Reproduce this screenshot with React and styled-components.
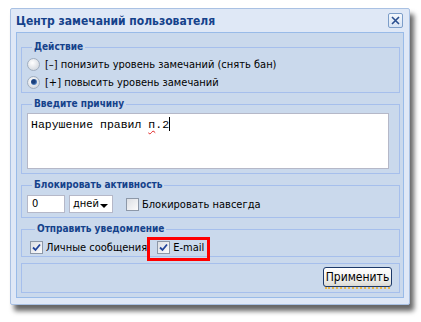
import styled, { createGlobalStyle } from "styled-components";

const GlobalStyle = createGlobalStyle`
  html, body {
    margin: 0;
    padding: 0;
    background: #ffffff;
  }
  body {
    font-family: "DejaVu Sans Condensed", "Liberation Sans", sans-serif;
    font-size: 11px;
  }
`;

const Stage = styled.div`
  width: 421px;
  height: 322px;
  padding: 8px 0 0 10px;
  box-sizing: border-box;
`;

const Window = styled.div`
  width: 400px;
  height: 297px;
  box-sizing: border-box;
  border: 1px solid #a9c1e3;
  border-radius: 2px;
  background: #dfe8f6;
  box-shadow: 4px 6px 5px rgba(0, 0, 0, 0.6);
  display: flex;
  flex-direction: column;
  padding: 0 5px 6px 5px;
`;

const Header = styled.div`
  height: 23px;
  display: flex;
  align-items: center;
  justify-content: space-between;
`;

const Title = styled.span`
  font-weight: bold;
  font-size: 12px;
  color: #15428b;
`;

const CloseButton = styled.div`
  width: 13px;
  height: 13px;
  margin: -1px 1px 0 0;
  border: 1px solid #7d9ec9;
  border-radius: 2px;
  background: linear-gradient(#f4f8fd, #d8e4f4);
  display: flex;
  align-items: center;
  justify-content: center;
`;

const Body = styled.div`
  flex: 1;
  border: 1px solid #99bbe8;
  background: #cad9ec;
  padding: 8px 3px 4px 4px;
  display: flex;
  flex-direction: column;
  gap: 5px;
`;

const Group = styled.fieldset`
  margin: 0;
  border: 1px solid #a6bfec;
  padding: ${(p) => p.$pad || "2px 5px 1px 5px"};
  min-width: 0;
  position: relative;
`;

const Legend = styled.legend`
  padding: 0 2px;
  margin-left: 5px;
  font-weight: bold;
  font-size: 10px;
  color: #15428b;
  line-height: 12px;
`;

const OptionRow = styled.label`
  height: 18px;
  display: flex;
  align-items: center;
  gap: 5px;
  color: #000;
  font-size: 11px;
`;

const Radio = styled.span`
  width: 11px;
  height: 11px;
  border-radius: 50%;
  border: 1px solid #a0aec0;
  background: radial-gradient(circle at 40% 35%, #ffffff, #d3d8df 80%);
  display: flex;
  align-items: center;
  justify-content: center;
  &::after {
    content: "";
    display: ${(p) => (p.$checked ? "block" : "none")};
    width: 6px;
    height: 6px;
    border-radius: 50%;
    background: radial-gradient(circle at 40% 40%, #1b3f7a 35%, #5d8fcf 75%, #a9c7ea);
  }
`;

const ReasonArea = styled.div`
  width: 362px;
  height: 56px;
  box-sizing: border-box;
  background: #ffffff;
  border: 1px solid #b5b8c8;
  padding: 3px 3px;
  font-family: "Liberation Mono", monospace;
  font-size: 11.5px;
  color: #000;
  line-height: 16px;
`;

const Misspelled = styled.span`
  text-decoration: underline wavy #e02020;
  text-decoration-thickness: 1px;
  text-underline-offset: 2px;
`;

const Caret = styled.span`
  display: inline-block;
  width: 1px;
  height: 14px;
  background: #000;
  vertical-align: -3px;
`;

const InlineRow = styled.div`
  display: flex;
  align-items: center;
  gap: ${(p) => p.$gap || "4px"};
  height: ${(p) => p.$h || "18px"};
`;

const NumberInput = styled.div`
  width: 38px;
  height: 18px;
  box-sizing: border-box;
  background: #fff;
  border: 1px solid #b5b8c8;
  padding: 0 4px;
  font-size: 11px;
  line-height: 16px;
  color: #000;
`;

const Select = styled.div`
  width: 44px;
  height: 18px;
  box-sizing: border-box;
  background: #fff;
  border: 1px solid #b5b8c8;
  padding: 0 4px 0 3px;
  font-size: 11px;
  line-height: 16px;
  color: #000;
  display: flex;
  align-items: center;
  justify-content: space-between;
  margin-right: 9px;
  &::after {
    content: "";
    width: 0;
    height: 0;
    border-left: 4px solid transparent;
    border-right: 4px solid transparent;
    border-top: 4px solid #000;
    margin-top: 3px;
  }
`;

const CheckLabel = styled.label`
  display: flex;
  align-items: center;
  gap: 3px;
  font-size: 11px;
  color: #000;
`;

const Box = styled.span`
  width: 11px;
  height: 11px;
  border: 1px solid #8d98a8;
  background: linear-gradient(135deg, #dcdfe4, #fbfbfc);
  display: flex;
  align-items: center;
  justify-content: center;
`;

const Highlight = styled.div`
  position: absolute;
  left: 125px;
  top: 2px;
  width: 57px;
  height: 18px;
  border: 3px solid #ff0000;
`;

const Footer = styled.div`
  flex: 1;
  margin-top: 1px;
  border: 1px solid #a6bfec;
  display: flex;
  justify-content: flex-end;
  align-items: flex-start;
  padding: 3px 7px 0 0;
`;

const Button = styled.button`
  width: 69px;
  height: 20px;
  box-sizing: border-box;
  border: 1px solid #1d3a6a;
  border-radius: 3px;
  background: linear-gradient(#ffffff, #f1f1ee 60%, #dcdbd4);
  font-family: "DejaVu Sans Condensed", "Liberation Sans", sans-serif;
  font-size: 12px;
  color: #000;
  padding: 0;
  position: relative;
  &::after {
    content: "";
    position: absolute;
    left: 1px;
    right: 1px;
    bottom: -3px;
    border-bottom: 2px dotted #e8b54a;
  }
`;

function Check() {
  return (
    <svg width="9" height="9" viewBox="0 0 9 9">
      <path d="M1 4.5 L3.5 7 L8 1.5" fill="none" stroke="#22449a" strokeWidth="1.8" />
    </svg>
  );
}

function Checkbox({ checked, children }) {
  return (
    <CheckLabel>
      <Box>{checked && <Check />}</Box>
      {children}
    </CheckLabel>
  );
}

export default function App() {
  return (
    <>
      <GlobalStyle />
      <Stage>
        <Window>
          <Header>
            <Title>Центр замечаний пользователя</Title>
            <CloseButton>
              <svg width="9" height="9" viewBox="0 0 9 9">
                <path d="M1 1 L8 8 M8 1 L1 8" stroke="#2a4f8f" strokeWidth="1.6" />
              </svg>
            </CloseButton>
          </Header>
          <Body>
            <Group>
              <Legend>Действие</Legend>
              <OptionRow>
                <Radio />
                [–] понизить уровень замечаний (снять бан)
              </OptionRow>
              <OptionRow>
                <Radio $checked />
                [+] повысить уровень замечаний
              </OptionRow>
            </Group>
            <Group $pad="3px 5px 4px 5px">
              <Legend>Введите причину</Legend>
              <ReasonArea>
                Нарушение правил <Misspelled>п</Misspelled>.2
                <Caret />
              </ReasonArea>
            </Group>
            <Group $pad="4px 5px 4px 5px">
              <Legend>Блокировать активность</Legend>
              <InlineRow>
                <NumberInput>0</NumberInput>
                <Select>дней</Select>
                <Checkbox>Блокировать навсегда</Checkbox>
              </InlineRow>
            </Group>
            <Group $pad="4px 5px 1px 8px">
              <Legend>Отправить уведомление</Legend>
              <InlineRow $gap="10px" $h="16px">
                <Checkbox checked>Личные сообщения</Checkbox>
                <Checkbox checked>E-mail</Checkbox>
              </InlineRow>
              <Highlight />
            </Group>
            <Footer>
              <Button>Применить</Button>
            </Footer>
          </Body>
        </Window>
      </Stage>
    </>
  );
}
